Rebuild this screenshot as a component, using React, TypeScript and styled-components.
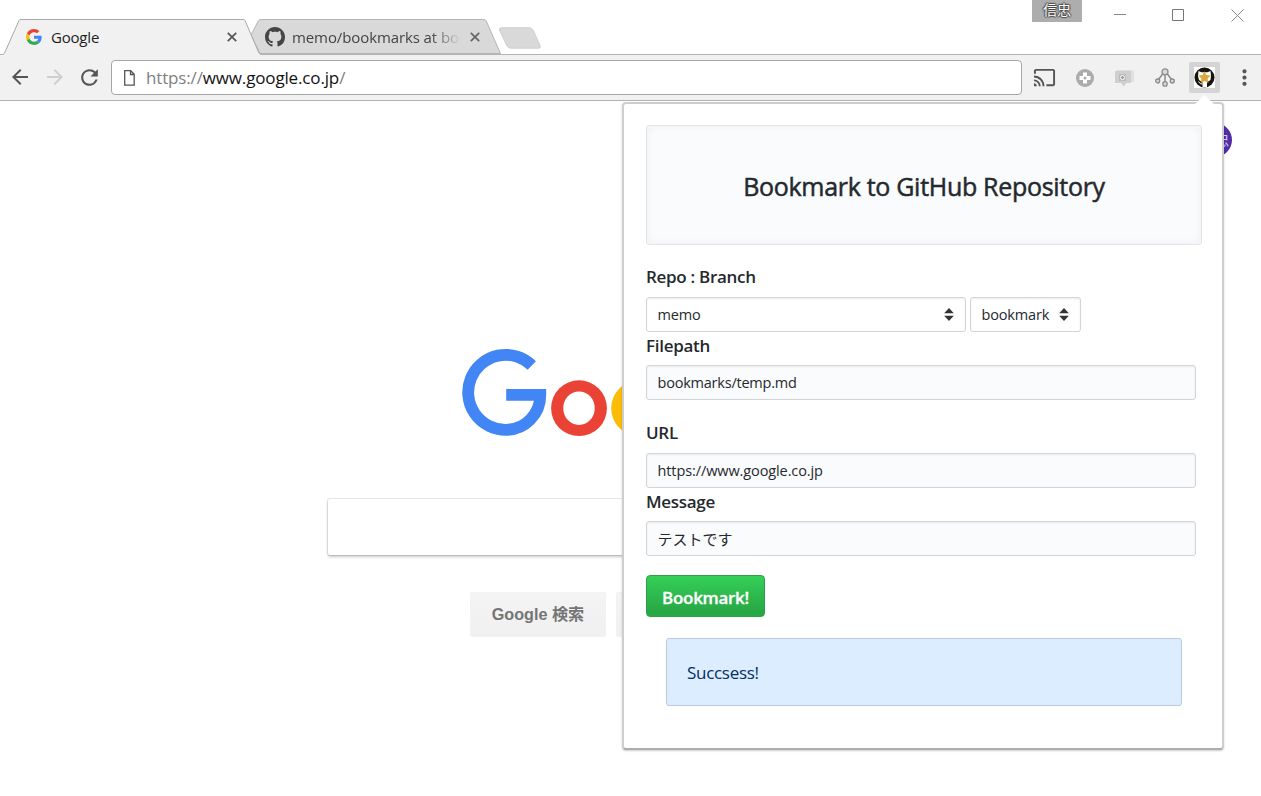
import React from 'react';
import styled, { createGlobalStyle } from 'styled-components';
import { MdArrowBack, MdArrowForward, MdRefresh, MdCast, MdMoreVert } from 'react-icons/md';

const UI_FONT = `"Open Sans", "Noto Sans CJK JP", sans-serif`;

const GlobalStyle = createGlobalStyle`
  * { box-sizing: border-box; }
  body { margin: 0; background: #fff; overflow: hidden; font-family: ${UI_FONT}; }
  button, input { font-family: inherit; margin: 0; }
  svg { display: block; flex: none; }
`;

const Window = styled.div`
  position: relative;
  width: 1261px;
  height: 796px;
  overflow: hidden;
  display: flex;
  flex-direction: column;
  background: #fff;
`;

const Text = styled.span<{ $size: number; $spacing?: number; $color?: string; $weight?: number; $stroke?: number }>`
  font-size: ${p => p.$size}px;
  letter-spacing: ${p => p.$spacing ?? 0}px;
  color: ${p => p.$color ?? 'inherit'};
  font-weight: ${p => p.$weight ?? 400};
  -webkit-text-stroke: ${p => p.$stroke ?? 0}px currentColor;
  white-space: nowrap;
`;

/* ---------- tab strip ---------- */

const TabStrip = styled.div`
  height: 55px;
  flex: none;
  display: flex;
  align-items: flex-end;
  border-bottom: 1px solid #b3b3b3;
`;

const Tab = styled.div<{ $active?: boolean }>`
  position: relative;
  z-index: ${p => (p.$active ? 2 : 1)};
  width: ${p => (p.$active ? 258 : 251)}px;
  height: 36px;
  margin: 0 0 -1px ${p => (p.$active ? 3 : -10)}px;
  padding: ${p => (p.$active ? '0 24px 0 23px' : '0 22px 0 14px')};
  display: flex;
  align-items: center;
  gap: 9px;
`;

const TabShape = styled.svg`
  position: absolute;
  inset: 0;
  z-index: -1;
`;

const TabTitle = styled.div<{ $fade?: boolean }>`
  flex: 1;
  min-width: 0;
  overflow: hidden;
  line-height: 24px;
  padding-bottom: 1px;
  display: flex;
  ${p => p.$fade && 'margin-left:-2px; mask-image: linear-gradient(to right, #000 82%, transparent 100%);'}
`;

const NewTab = styled.svg`
  margin: 0 0 5px -4px;
`;

const ProfileBadge = styled.div`
  align-self: flex-start;
  width: 50px;
  height: 22px;
  margin-left: auto;
  background: #adadad;
  color: #fff;
  font-size: 14px;
  line-height: 19px;
  text-align: center;
  text-shadow: 1px 0 1px #444, -1px 0 1px #444, 0 1px 1px #444, 0 -1px 1px #444;
`;

const WindowControls = styled.div`
  align-self: flex-start;
  display: flex;
  margin-left: 9px;
  height: 30px;
  width: 170px;
`;

const Control = styled.div`
  width: 58.5px;
  flex: none;
  display: flex;
  justify-content: center;
  align-items: center;
`;

/* ---------- toolbar ---------- */

const Toolbar = styled.div`
  height: 46px;
  flex: none;
  display: flex;
  align-items: center;
  background: #f1f1f1;
  border-bottom: 1px solid #b0b0b0;
  padding-left: 2px;
`;

const NavButton = styled.div<{ $disabled?: boolean }>`
  width: 35px;
  flex: none;
  display: flex;
  justify-content: center;
  margin-top: -1px;
  color: ${p => (p.$disabled ? '#cfcfcf' : '#555')};
`;

const Omnibox = styled.div`
  width: 911px;
  height: 35px;
  flex: none;
  margin: 0 2.5px 0 4px;
  padding-left: 12px;
  border: 1px solid #a6a6a6;
  border-radius: 4px;
  background: #fff;
  display: flex;
  align-items: center;
  gap: 11px;
`;

const Extension = styled.div`
  width: 40px;
  height: 31px;
  flex: none;
  display: flex;
  justify-content: center;
  align-items: center;
  color: #555;
`;

const ActiveExtension = styled.div`
  width: 31px;
  height: 31px;
  border-radius: 2px;
  background: #d4d4d4;
  display: flex;
  justify-content: center;
  align-items: center;
`;

/* ---------- search page ---------- */

const SearchPage = styled.main`
  position: relative;
  flex: 1;
  display: flex;
  flex-direction: column;
  align-items: center;
`;

const AccountRow = styled.div`
  align-self: stretch;
  height: 243px;
  padding: 22px 29px 0 0;
  display: flex;
  justify-content: flex-end;
`;

const Avatar = styled.div`
  width: 34px;
  height: 34px;
  border-radius: 50%;
  background: #512da8;
  color: #d8cdf0;
  font-size: 14px;
  line-height: 33px;
  text-align: center;
`;

const SearchBox = styled.div`
  width: 605px;
  height: 56px;
  margin-top: 55px;
  border-radius: 2px;
  background: #fff;
  box-shadow: 0 2px 3px rgba(0, 0, 0, 0.22), 0 0 0 1px rgba(0, 0, 0, 0.09);
`;

const SearchButtons = styled.div`
  display: flex;
  gap: 10px;
  margin-top: 37px;
`;

const SearchButton = styled.div<{ $width: number }>`
  width: ${p => p.$width}px;
  height: 45px;
  border: 1px solid #f2f2f2;
  border-radius: 2px;
  background: linear-gradient(#f4f4f4, #f0f0f0);
  font: bold 16.2px/43px "Liberation Sans", "Noto Sans CJK JP", sans-serif;
  color: #757575;
  text-align: center;
  white-space: nowrap;
`;

/* ---------- extension popup ---------- */

const Popup = styled.section`
  position: absolute;
  left: 622px;
  top: 102px;
  width: 602px;
  height: 648px;
  padding: 21px 20px 0 22px;
  border: 2px solid #cecece;
  border-bottom-color: #adadad;
  border-radius: 4px;
  background: #fff;
  box-shadow: 0 1px 2px rgba(0, 0, 0, 0.2);
  color: #24292e;
`;

const PopupTip = styled.svg`
  position: absolute;
  left: 1192px;
  top: 94px;
`;

const Well = styled.header`
  height: 120px;
  width: 556px;
  display: flex;
  align-items: center;
  justify-content: center;
  padding-top: 1px;
  border: 1px solid #e1e4e8;
  border-radius: 3px;
  background: #fafbfc;
  box-shadow: inset 0 0 8px rgba(27, 31, 35, 0.05);
`;

const Label = styled.div<{ $gap?: number }>`
  height: 33px;
  margin-top: ${p => p.$gap ?? 0}px;
  line-height: ${p => (p.$gap ? 26 : 28)}px;
  display: flex;
`;

const SelectRow = styled.div`
  display: flex;
  gap: 4px;
`;

const Field = styled.div<{ $width: number; $select?: boolean }>`
  width: ${p => p.$width}px;
  height: 35px;
  padding: 0 11px 0 10.5px;
  display: flex;
  align-items: center;
  justify-content: space-between;
  border: 1px solid #d1d5da;
  border-radius: 3px;
  background: ${p => (p.$select ? '#fff' : '#fafbfc')};
  box-shadow: inset 0 1px 2px rgba(27, 31, 35, 0.075);
`;

const SubmitButton = styled.button`
  display: flex;
  align-items: center;
  justify-content: center;
  width: 119px;
  height: 42px;
  margin-top: 19px;
  padding: 3px 0 0;
  border: 1px solid #2f9e46;
  border-radius: 4px;
  background: linear-gradient(#34d058, #28a745 90%);
  color: #fff;
`;

const Flash = styled.div`
  width: 516px;
  height: 68px;
  margin: 21px 0 0 20px;
  padding: 1px 20px 0;
  display: flex;
  align-items: center;
  border: 1px solid #b9c9db;
  border-radius: 3px;
  background: #dbedff;
  color: #032f62;
`;

const CloseGlyph = ({ color }: { color: string }) => (
  <svg width="10" height="10" viewBox="0 0 10 10">
    <path d="M.8.8l8.4 8.4M9.2.8L.8 9.2" stroke={color} strokeWidth="1.7" />
  </svg>
);

const GitHubMark = () => (
  <svg width="20" height="20" viewBox="0 0 16 16" fill="#444">
    <path d="M8 0C3.58 0 0 3.58 0 8c0 3.54 2.29 6.53 5.47 7.59.4.07.55-.17.55-.38 0-.19-.01-.82-.01-1.49-2.01.37-2.53-.49-2.69-.94-.09-.23-.48-.94-.82-1.13-.28-.15-.68-.52-.01-.53.63-.01 1.08.58 1.23.82.72 1.21 1.87.87 2.33.66.07-.52.28-.87.51-1.07-1.78-.2-3.64-.89-3.64-3.95 0-.87.31-1.59.82-2.15-.08-.2-.36-1.02.08-2.12 0 0 .67-.21 2.2.82.64-.18 1.32-.27 2-.27s1.36.09 2 .27c1.53-1.04 2.2-.82 2.2-.82.44 1.1.16 1.92.08 2.12.51.56.82 1.27.82 2.15 0 3.07-1.87 3.75-3.65 3.95.29.25.54.73.54 1.48 0 1.07-.01 1.93-.01 2.2 0 .21.15.46.55.38A8.01 8.01 0 0 0 16 8c0-4.42-3.58-8-8-8z" />
  </svg>
);

const GoogleFavicon = () => (
  <svg width="16" height="16" viewBox="0 0 48 48">
    <path fill="#EA4335" d="M24 9.5c3.54 0 6.71 1.22 9.21 3.6l6.85-6.85C35.9 2.38 30.47 0 24 0 14.62 0 6.51 5.38 2.56 13.22l7.98 6.19C12.43 13.72 17.74 9.5 24 9.5z" />
    <path fill="#4285F4" d="M46.98 24.55c0-1.57-.15-3.09-.38-4.55H24v9.02h12.94c-.58 2.96-2.26 5.48-4.78 7.18l7.73 6c4.51-4.18 7.09-10.36 7.09-17.65z" />
    <path fill="#FBBC05" d="M10.53 28.59c-.48-1.45-.76-2.99-.76-4.59s.27-3.14.76-4.59l-7.98-6.19C.92 16.46 0 20.12 0 24c0 3.88.92 7.54 2.56 10.78l7.97-6.19z" />
    <path fill="#34A853" d="M24 48c6.48 0 11.93-2.13 15.89-5.81l-7.73-6c-2.15 1.45-4.92 2.3-8.16 2.3-6.26 0-11.57-4.22-13.47-9.91l-7.98 6.19C6.51 42.62 14.62 48 24 48z" />
  </svg>
);

const GoogleLogo = () => (
  <svg width="340" height="100" viewBox="460.8 343.8 340 100">
    <path
      d="M531.6 365.2A37.5 37.5 0 1 0 505.5 429.6A34.6 34.6 0 0 0 540.1 394.7H506"
      fill="none"
      stroke="#4285f4"
      strokeWidth="11.8"
    />
    <ellipse cx="578.8" cy="408" rx="27.9" ry="27.9" fill="#ea4335" />
    <ellipse cx="578.8" cy="408" rx="15.7" ry="16.8" fill="#fff" />
    <circle cx="639" cy="408" r="28" fill="#fbbc05" />
  </svg>
);

const Sorter = () => (
  <svg width="10" height="13" viewBox="0 0 10 13">
    <path d="M5 0l4.8 5.3H.2zM5 13l4.8-5.3H.2z" fill="#333" />
  </svg>
);

export default function App() {
  return (
    <Window>
      <GlobalStyle />
      <TabStrip>
        <Tab $active>
          <TabShape width="258" height="36" viewBox="0 0 258 36">
            <path d="M0 36L.5 35.5Q1.5 34.5 2.5 32L16 1.5Q16.5.5 18 .5H240Q241.5.5 242 1.5L255.5 33Q256.3 35 258 35.5V36z" fill="#f1f1f1" />
            <path d="M0 35.5Q1.5 34.5 2.5 32L16 1.5Q16.5.5 18 .5H240Q241.5.5 242 1.5L255.5 33Q256.3 35 258 35.5" fill="none" stroke="#a8a8a8" />
          </TabShape>
          <GoogleFavicon />
          <TabTitle>
            <Text $size={15} $spacing={-0.2} $color="#1e1e1e">Google</Text>
          </TabTitle>
          <CloseGlyph color="#555" />
        </Tab>
        <Tab>
          <TabShape width="251" height="36" viewBox="0 0 251 36">
            <path d="M0 16L7.5 1.5Q8 .5 10 .5H233Q234.500 .5 235 1.500L249.500 34.500H9z" fill="#d9d9d9" stroke="#b5b5b5" />
          </TabShape>
          <GitHubMark />
          <TabTitle $fade>
            <Text $size={15} $spacing={-0.1} $color="#444">memo/bookmarks at bookmark</Text>
          </TabTitle>
          <CloseGlyph color="#666" />
        </Tab>
        <NewTab width="44" height="23" viewBox="0 0 44 23">
          <path d="M3.500 1H31q3 0 4.500 3l6.500 15q1 2.500-1.500 2.500H13q-3 0-4.500-3L1.500 3.500Q1 1 3.500 1z" transform="translate(0 .7)" fill="#d9d9d9" stroke="#cfcfcf" />
        </NewTab>
        <ProfileBadge>信忠</ProfileBadge>
        <WindowControls>
          <Control>
            <svg width="12" height="12"><path d="M0 5.500h12" stroke="#888" /></svg>
          </Control>
          <Control>
            <svg width="13" height="13"><path d="M.5.5h11v11H.5z" fill="none" stroke="#777" /></svg>
          </Control>
          <Control>
            <svg width="13" height="13"><path d="M.5.5l12 12M12.500.5l-12 12" stroke="#888" /></svg>
          </Control>
        </WindowControls>
      </TabStrip>

      <Toolbar>
        <NavButton><MdArrowBack size={24} /></NavButton>
        <NavButton $disabled><MdArrowForward size={24} /></NavButton>
        <NavButton><MdRefresh size={25} /></NavButton>
        <Omnibox>
          <svg width="11" height="16" viewBox="0 0 11 16">
            <path d="M.7.7h6l3.500 3.500v11H.7zM6.500.7v3.800h3.700" fill="none" stroke="#555" strokeWidth="1.300" />
          </svg>
          <Text $size={17} $spacing={-0.15} $color="#111">
            <Text as="span" $size={17} $spacing={-0.15} $color="#808080">https://</Text>
            www.google.co.jp
            <Text as="span" $size={17} $color="#808080">/</Text>
          </Text>
        </Omnibox>
        <Extension><MdCast size={23} /></Extension>
        <Extension>
          <svg width="18" height="18" viewBox="0 0 18 18">
            <circle cx="9" cy="9" r="9" fill="#ababab" />
            <path d="M7 3.500h4V7h3.500v4H11v3.500H7V11H3.500V7H7z" fill="#fff" />
            <circle cx="9" cy="9" r="1.500" fill="#ababab" />
          </svg>
        </Extension>
        <Extension>
          <svg width="21" height="18" viewBox="0 0 21 18">
            <path d="M17 1.500h3V13h-3z" fill="#e0e0e0" />
            <path d="M1 2.500l2-1h14V14h-4.500L9.500 17.500 7 14H1z" fill="#cfcfcf" />
            <path d="M5 5h7v7H5z" fill="#bcbcbc" />
            <circle cx="8.500" cy="8.500" r="2" fill="#999" stroke="#fff" />
          </svg>
        </Extension>
        <Extension>
          <svg width="20" height="19" viewBox="0 0 20 19">
            <path d="M10 6v8M8 5.500L3.500 11.500M12 5.500l4.500 6" stroke="#8c8c8c" strokeWidth="1.500" />
            <g fill="#d8d8d8" stroke="#8c8c8c" strokeWidth="1.300">
              <circle cx="10" cy="3.800" r="3" />
              <circle cx="2.700" cy="13" r="2" />
              <circle cx="10" cy="15.900" r="2.200" />
              <circle cx="17.300" cy="13" r="2" />
            </g>
          </svg>
        </Extension>
        <Extension>
          <ActiveExtension>
            <svg width="21" height="21" viewBox="0 0 21 21">
              <rect width="21" height="21" fill="#fff" />
              <circle cx="10.500" cy="10.500" r="10" fill="#15130f" />
              <path d="M4.500 4l3 1.200h6l3-1.200.5 4.500-.5 4.500-3.500 2.300v5H8.500v-5L5 13l-1-4z" fill="#fff" />
              <path d="M4.500 14.500q1.500 3 4 2.500" fill="none" stroke="#fff" />
              <path d="M10.500 4.200l1.900 3.900 4.300.5-3.100 3 .8 4.300-3.900-2-3.900 2 .8-4.300-3.100-3 4.300-.5z" fill="#dda93c" />
            </svg>
          </ActiveExtension>
        </Extension>
        <Extension><MdMoreVert size={25} /></Extension>
      </Toolbar>

      <SearchPage>
        <AccountRow>
          <Avatar>信忠</Avatar>
        </AccountRow>
        <GoogleLogo />
        <SearchBox />
        <SearchButtons>
          <SearchButton $width={136}>Google 検索</SearchButton>
          <SearchButton $width={175} />
        </SearchButtons>
      </SearchPage>

      <Popup>
        <Well>
          <Text $size={25} $stroke={0.5} $spacing={-0.3}>Bookmark to GitHub Repository</Text>
        </Well>
        <Label $gap={19}><Text $size={17} $weight={600} $spacing={-0.3}>Repo : Branch</Text></Label>
        <SelectRow>
          <Field $width={320} $select><Text $size={14.5} $spacing={-0.2}>memo</Text><Sorter /></Field>
          <Field $width={111} $select><Text $size={14.5} $spacing={-0.15}>bookmark</Text><Sorter /></Field>
        </SelectRow>
        <Label><Text $size={17} $weight={600} $spacing={-0.3}>Filepath</Text></Label>
        <Field $width={550}><Text $size={14.5} $spacing={-0.22}>bookmarks/temp.md</Text></Field>
        <Label $gap={20}><Text $size={17} $weight={600} $spacing={-0.3}>URL</Text></Label>
        <Field $width={550}><Text $size={14.5} $spacing={-0.1}>https://www.google.co.jp</Text></Field>
        <Label><Text $size={17} $weight={600} $spacing={-0.3}>Message</Text></Label>
        <Field $width={550}><Text $size={15}>テストです</Text></Field>
        <SubmitButton type="button"><Text $size={17} $weight={600} $stroke={0.3} $spacing={-0.3}>Bookmark!</Text></SubmitButton>
        <Flash><Text $size={17} $spacing={-0.3}>Succsess!</Text></Flash>
      </Popup>
      <PopupTip width="24" height="12" viewBox="0 0 24 12">
        <path d="M2 11L12.500 1 23 11z" fill="#fff" />
      </PopupTip>
    </Window>
  );
}
